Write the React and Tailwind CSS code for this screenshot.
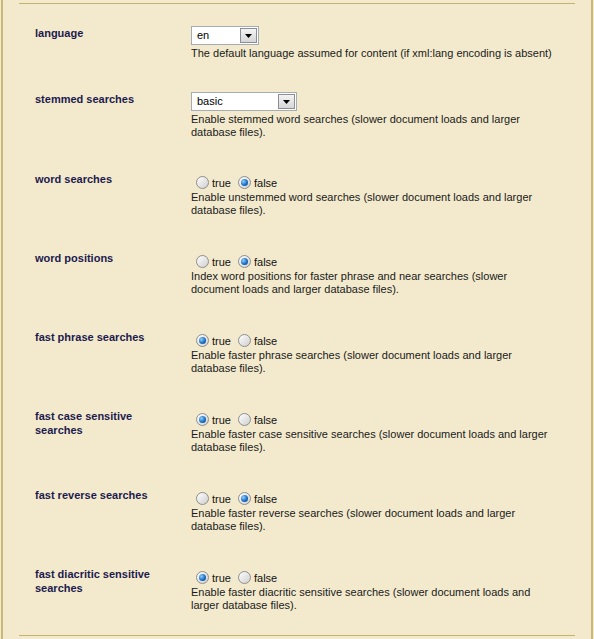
const rows = [
  {
    label: "language",
    kind: "select",
    value: "en",
    width: "w-[68px]",
    pb: "pb-[15px]",
    desc: "The default language assumed for content (if xml:lang encoding is absent)",
  },
  {
    label: "stemmed searches",
    kind: "select",
    value: "basic",
    width: "w-[106px]",
    pb: "pb-[16px]",
    desc: "Enable stemmed word searches (slower document loads and larger database files).",
  },
  {
    label: "word searches",
    kind: "radio",
    checked: false,
    desc: "Enable unstemmed word searches (slower document loads and larger database files).",
  },
  {
    label: "word positions",
    kind: "radio",
    checked: false,
    desc: "Index word positions for faster phrase and near searches (slower document loads and larger database files).",
  },
  {
    label: "fast phrase searches",
    kind: "radio",
    checked: true,
    desc: "Enable faster phrase searches (slower document loads and larger database files).",
  },
  {
    label: "fast case sensitive searches",
    kind: "radio",
    checked: true,
    desc: "Enable faster case sensitive searches (slower document loads and larger database files).",
  },
  {
    label: "fast reverse searches",
    kind: "radio",
    checked: false,
    desc: "Enable faster reverse searches (slower document loads and larger database files).",
  },
  {
    label: "fast diacritic sensitive searches",
    kind: "radio",
    checked: true,
    desc: "Enable faster diacritic sensitive searches (slower document loads and larger database files).",
  },
];

function Select({ value, width }) {
  return (
    <div className={`${width} h-[19px] border border-[#a5acb2] bg-white flex items-center justify-between pl-[5px] pr-[1px]`}>
      <span className="text-[11px] leading-none text-black">{value}</span>
      <span className="w-[17px] h-[15px] border border-[#8a8f96] bg-gradient-to-b from-[#f4f4f4] to-[#d6d6d6] flex items-center justify-center">
        <svg width="7" height="4" viewBox="0 0 7 4">
          <path d="M0 0h7L3.5 4z" fill="#000" />
        </svg>
      </span>
    </div>
  );
}

function Radio({ on }) {
  return (
    <span className="w-[13px] h-[13px] rounded-full border border-[#8d8d8d] bg-gradient-to-br from-[#ffffff] to-[#cfcfcf] flex items-center justify-center">
      {on && (
        <span className="w-[7px] h-[7px] rounded-full bg-[radial-gradient(circle_at_35%_35%,#8fd0ff,#1a6fc4_55%,#0a3f80)]" />
      )}
    </span>
  );
}

function RadioPair({ checked }) {
  return (
    <div className="pt-[4px] h-[17px] flex items-end text-[11px] leading-[13px] text-[#111]">
      <span className="ml-[5px] mr-[3px]"><Radio on={checked} /></span>
      <span className="translate-y-[1px]">true</span>
      <span className="ml-[7px] mr-[3px]"><Radio on={!checked} /></span>
      <span className="translate-y-[1px]">false</span>
    </div>
  );
}

export default function App() {
  return (
    <div className="w-[594px] h-[639px] bg-[#f3eacd] pl-[1px] font-['Liberation_Sans',Arial,sans-serif]">
      <div className="w-[592px] h-full border-x-2 border-[#c9b878] px-4 pt-[3px]">
        <div className="border-t border-[#c4b26e]" />
        <div className="mt-[5px] mb-[6px]">
          {rows.map((row) => (
            <div key={row.label} className={`flex pt-[17px] ${row.pb || "pb-[17px]"}`}>
              <div className="w-[172px] pl-4 pr-4 text-[11px] leading-[14px] font-bold text-[#1c1a4e]">
                {row.label}
              </div>
              <div className="w-[365px]">
                {row.kind === "select" ? (
                  <Select value={row.value} width={row.width} />
                ) : (
                  <RadioPair checked={row.checked} />
                )}
                <p className="mt-[2px] text-[11px] leading-[13px] text-[#1a1a1a]">{row.desc}</p>
              </div>
            </div>
          ))}
        </div>
        <div className="border-t border-[#c4b26e]" />
      </div>
    </div>
  );
}
